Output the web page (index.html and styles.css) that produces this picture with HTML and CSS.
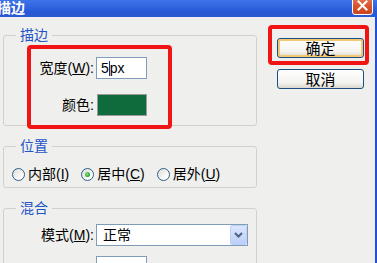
FILE: index.html
```html
<!DOCTYPE html>
<html lang="zh-CN">
<head>
<meta charset="utf-8">
<title>描边</title>
<link rel="stylesheet" href="styles.css">
</head>
<body>
<div class="window">
  <div class="titlebar">
    <span class="title">描边</span>
    <span class="close">
      <svg width="11" height="11" viewBox="0 0 11 11"><path d="M1.5 1.5 L9.5 9.5 M9.5 1.5 L1.5 9.5" stroke="#fff" stroke-width="2" stroke-linecap="square"/></svg>
    </span>
  </div>
  <div class="client">
    <div class="main">
      <fieldset class="group">
        <legend>描边</legend>
        <div class="form f1">
          <label class="lbl">宽度(<u>W</u>):</label>
          <div class="input short"><span>5</span><span class="caret"></span><span>px</span></div>
          <label class="lbl">颜色:</label>
          <div class="swatch"></div>
        </div>
      </fieldset>
      <fieldset class="group">
        <legend>位置</legend>
        <div class="radios">
          <div class="ritem"><span class="radio"></span><span>内部(<u>I</u>)</span></div>
          <div class="ritem"><span class="radio checked"></span><span>居中(<u>C</u>)</span></div>
          <div class="ritem"><span class="radio"></span><span>居外(<u>U</u>)</span></div>
        </div>
      </fieldset>
      <fieldset class="group">
        <legend>混合</legend>
        <div class="form f3">
          <label class="lbl">模式(<u>M</u>):</label>
          <div class="select"><span class="sel-text">正常</span><span class="drop"><svg width="9" height="6" viewBox="0 0 9 6"><path d="M1 1 L4.5 4.5 L8 1" fill="none" stroke="#4d6185" stroke-width="2"/></svg></span></div>
          <label class="lbl"></label>
          <div class="input short"></div>
        </div>
      </fieldset>
    </div>
    <div class="buttons">
      <button class="btn default">确定</button>
      <button class="btn">取消</button>
    </div>
  </div>
  <div class="mark mark-form"></div>
  <div class="mark mark-ok"></div>
</div>
</body>
</html>
```
FILE: styles.css
```css
html, body {
  margin: 0;
  padding: 0;
}
body {
  width: 377px;
  height: 263px;
  overflow: hidden;
  background: #efefed;
  font-family: "Liberation Sans", "Noto Sans CJK SC", sans-serif;
  font-size: 14px;
  color: #000;
}
.window {
  position: relative;
  height: 263px;
  display: flex;
  flex-direction: column;
}
.titlebar {
  flex: none;
  height: 17px;
  background: linear-gradient(#3d74ea, #2759d6 70%, #2a5ad0);
  display: flex;
  justify-content: space-between;
  align-items: flex-start;
}
.title {
  color: #fff;
  font-weight: bold;
  font-size: 14px;
  line-height: 16px;
  margin-left: -3px;
}
.close {
  width: 21px;
  height: 21px;
  margin-top: -6px;
  margin-right: 4px;
  box-sizing: border-box;
  border: 1px solid #fff;
  border-radius: 3px;
  background: linear-gradient(#e98466, #d6532c 60%, #c8461f);
  display: flex;
  align-items: flex-end;
  justify-content: center;
  padding-bottom: 3px;
}
.client {
  flex: 1;
  display: flex;
  border-right: 2px solid #2050d8;
}
.main {
  width: 254px;
  margin-left: 3px;
  padding-top: 11px;
  display: flex;
  flex-direction: column;
  gap: 13px;
}
.group {
  margin: 0;
  padding: 0;
  border: 1px solid #d2d2cc;
  border-radius: 3px;
  min-width: 0;
}
.group legend {
  margin-left: 12px;
  padding: 0 4px;
  color: #1f55c8;
  font-size: 14px;
  line-height: 14px;
}
.form {
  display: grid;
  grid-template-columns: 90px 1fr;
  column-gap: 2px;
  align-items: center;
  justify-items: start;
}
.f1 {
  row-gap: 15px;
  padding: 15px 0 9px;
}
.f3 {
  row-gap: 10px;
  padding: 9px 0 8px;
}
.lbl {
  justify-self: end;
  line-height: 16px;
}
.input {
  box-sizing: border-box;
  height: 22px;
  border: 1px solid #7f9db9;
  background: #fff;
  display: flex;
  align-items: center;
  padding-left: 4px;
  line-height: 16px;
}
.short {
  width: 51px;
}
.caret {
  width: 1px;
  height: 15px;
  background: #1b2d8a;
}
.swatch {
  box-sizing: border-box;
  width: 50px;
  height: 22px;
  margin-left: 1px;
  border: 1px solid #9a9a9a;
  background: #0f6b3b;
}
.radios {
  display: flex;
  gap: 12px;
  padding: 13px 0 5px 8px;
}
.ritem {
  display: flex;
  align-items: center;
  gap: 3px;
  line-height: 16px;
}
.radio {
  box-sizing: border-box;
  width: 13px;
  height: 13px;
  border-radius: 50%;
  border: 1px solid #2f5d8c;
  background: linear-gradient(135deg, #dcdcd6, #ffffff 80%);
  display: flex;
  align-items: center;
  justify-content: center;
}
.radio.checked::after {
  content: "";
  width: 5px;
  height: 5px;
  border-radius: 50%;
  background: radial-gradient(circle at 40% 40%, #8fe38f, #21a121 70%);
}
.select {
  box-sizing: border-box;
  width: 152px;
  height: 22px;
  border: 1px solid #7f9db9;
  background: #fff;
  display: flex;
  align-items: center;
  justify-content: space-between;
}
.sel-text {
  padding-left: 6px;
  line-height: 16px;
}
.drop {
  box-sizing: border-box;
  width: 17px;
  height: 20px;
  border: 1px solid #bcd0f8;
  border-radius: 2px;
  background: linear-gradient(#dbe6fd, #bccff9);
  display: flex;
  align-items: center;
  justify-content: center;
}
.buttons {
  margin-left: 20px;
  padding-top: 21px;
  display: flex;
  flex-direction: column;
  gap: 11px;
}
.btn {
  box-sizing: border-box;
  width: 87px;
  height: 20px;
  padding: 0;
  border: 1px solid #1d4e80;
  border-radius: 3px;
  background: linear-gradient(#ffffff, #f4f3ef 70%, #dcd8ce);
  font-family: "Noto Sans CJK SC", sans-serif;
  font-size: 15px;
  line-height: 16px;
  color: #000;
}
.btn.default {
  box-shadow: inset 0 0 0 2px #f3c872;
}
.mark {
  position: absolute;
  box-sizing: border-box;
  border: 4px solid #f01414;
  border-radius: 4px;
}
.mark-form {
  left: 27px;
  top: 45px;
  width: 145px;
  height: 84px;
}
.mark-ok {
  left: 268px;
  top: 25px;
  width: 101px;
  height: 40px;
}
```
